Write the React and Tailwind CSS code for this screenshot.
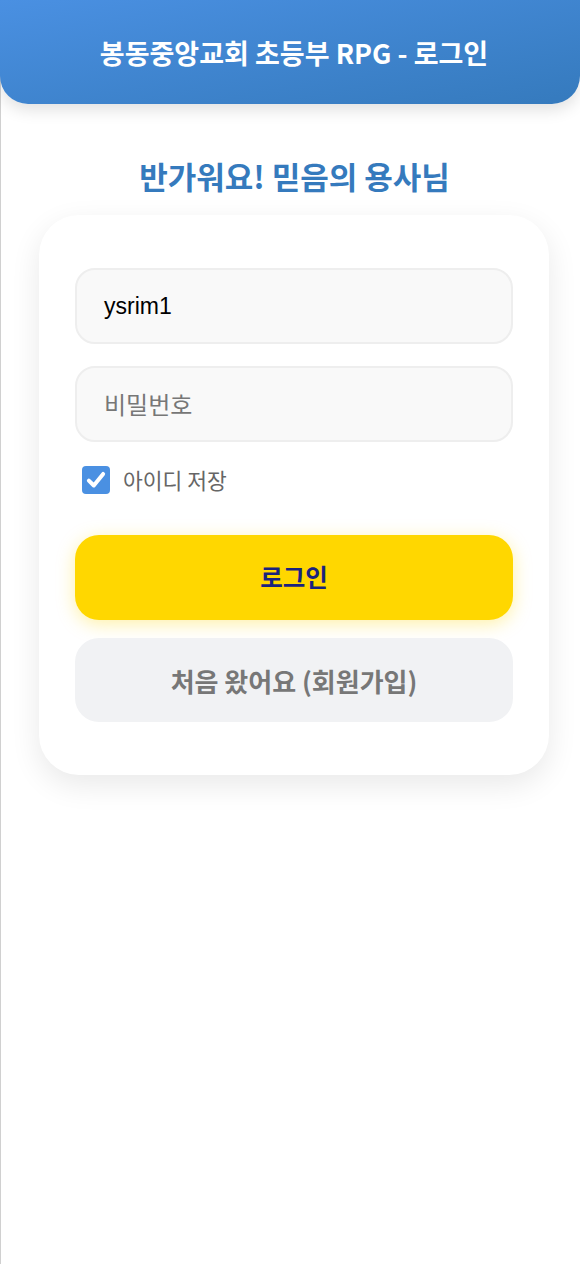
import React from "react";

const KR = { fontFamily: '"Noto Sans CJK KR", "Noto Sans", sans-serif' };

export default function App() {
  return (
    <div className="min-h-screen bg-white border-l border-[#d0d0d0]" style={KR}>
      <header className="-ml-px h-[104px] rounded-b-[28px] bg-gradient-to-br from-[#4a90e2] to-[#357abd] shadow-[0_6px_16px_rgba(0,0,0,0.12)] flex items-center justify-center pl-[8px]">
        <h1 className="text-white font-bold text-[27px] leading-none">봉동중앙교회 초등부 RPG - 로그인</h1>
      </header>
      <h2 className="mt-[56px] pl-[8px] text-center text-[#357abd] font-bold text-[31px] leading-none">반가워요! 믿음의 용사님</h2>
      <div className="ml-[38px] mt-[24px] w-[510px] rounded-[40px] bg-white shadow-[0_10px_30px_rgba(0,0,0,0.09)] px-[36px] pt-[53px] pb-[53px]">
        <div className="flex flex-col gap-[22px]">
          <div className="h-[76px] rounded-[20px] border-2 border-[#eeeeee] bg-[#f9f9f9] flex items-center pl-[27px] text-[23px] text-black" style={{ fontFamily: '"Liberation Sans", Arial, sans-serif' }}>
            ysrim1
          </div>
          <div className="h-[76px] rounded-[20px] border-2 border-[#eeeeee] bg-[#f9f9f9] flex items-center pl-[27px] text-[24px] text-[#777]">
            비밀번호
          </div>
        </div>
        <div className="mt-[24px] ml-[7px] flex items-center gap-[13px]">
          <span className="w-[28px] h-[28px] rounded-[4px] bg-[#4a90e2] flex items-center justify-center">
            <svg width="22" height="22" viewBox="0 0 20 20">
              <path d="M3.5 10.5 L8 15 L16.5 4.5" fill="none" stroke="white" strokeWidth="3.6" strokeLinecap="round" strokeLinejoin="round" />
            </svg>
          </span>
          <span className="text-[21.5px] text-[#666] leading-none">아이디 저장</span>
        </div>
        <button className="mt-[41px] w-full h-[85px] rounded-[24px] bg-[#ffd700] shadow-[0_4px_18px_rgba(255,215,0,0.35)] text-[#1a237e] font-bold text-[24.5px]" style={KR}>
          로그인
        </button>
        <button className="mt-[18px] w-full h-[84px] rounded-[24px] bg-[#f1f2f4] text-[#777] font-bold text-[26px]" style={KR}>
          처음 왔어요 (회원가입)
        </button>
      </div>
    </div>
  );
}
